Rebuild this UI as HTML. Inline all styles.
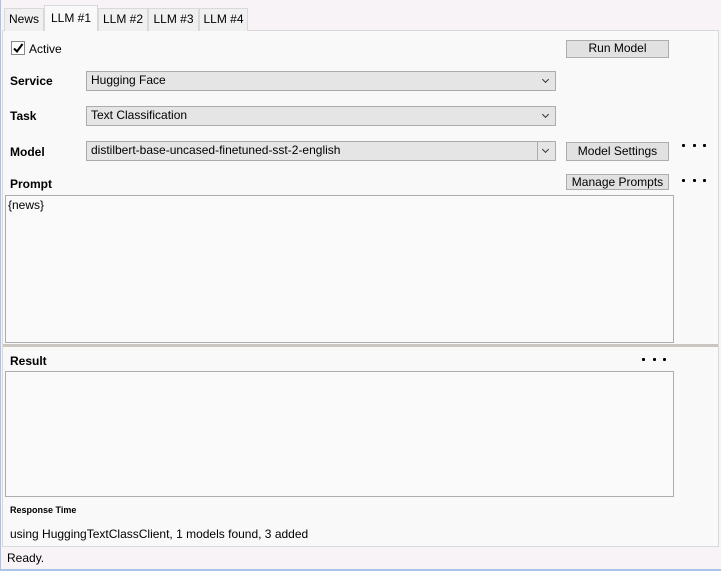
<!DOCTYPE html>
<html><head><style>
*{margin:0;padding:0;box-sizing:border-box}
body{width:721px;height:571px;position:relative;background:#f7f3f7;font-family:"Liberation Sans",sans-serif;font-size:12px;color:#000;overflow:hidden}
.a{position:absolute}
.tab{position:absolute;top:8px;height:23px;border:1px solid #d9d9d9;border-bottom:none;background:#f0f0f0;text-align:center;line-height:20px}
.btn{position:absolute;background:#e1e1e1;border:1px solid #adadad;text-align:center;line-height:15px}
.cb{position:absolute;left:86px;width:470px;height:20px;background:#e5e5e5;border:1px solid #acacac;padding-left:4px;line-height:17px}
.cb:after{content:"";position:absolute;right:7px;top:5px;width:4px;height:4px;border-right:1.5px solid #333;border-bottom:1.5px solid #333;transform:rotate(45deg)}
.lbl{position:absolute;left:10px;font-weight:bold;font-size:12px}
.box{position:absolute;left:5px;width:669px;background:#fafafa;border:1px solid #abadb3}
.dots{position:absolute;width:24px;height:3px;display:flex;justify-content:space-between}
.dots i{display:block;width:3px;height:3px;background:#000;border-radius:1px}
</style></head><body>
<div class="a" style="left:0;top:0;width:1px;height:571px;background:#a9c4e8"></div>
<div class="a" style="left:0;top:569px;width:721px;height:2px;background:#a9c4e8"></div>
<div class="a" style="left:2px;top:30px;width:717px;height:517px;background:#f9f9f9;border:1px solid #d9d9d9"></div>
<div class="tab" style="left:4px;width:40px">News</div>
<div class="tab" style="left:44px;top:5px;height:26px;width:54px;background:#f9f9f9;line-height:24px;z-index:2">LLM #1</div>
<div class="tab" style="left:98px;width:50px">LLM #2</div>
<div class="tab" style="left:148px;width:51px">LLM #3</div>
<div class="tab" style="left:199px;width:49px">LLM #4</div>
<div class="a" style="left:11px;top:41px;width:14px;height:14px;border:1px solid #888;background:#fff"><svg width="12" height="12" style="position:absolute;left:0;top:0"><path d="M2 6.5 L5 9.5 L10.5 2" fill="none" stroke="#000" stroke-width="2"/></svg></div>
<div class="a" style="left:29px;top:42px">Active</div>
<div class="btn" style="left:566px;top:40px;width:103px;height:18px">Run Model</div>
<div class="lbl" style="top:74px">Service</div>
<div class="cb" style="top:71px">Hugging Face</div>
<div class="lbl" style="top:109px">Task</div>
<div class="cb" style="top:106px">Text Classification</div>
<div class="lbl" style="top:145px">Model</div>
<div class="cb" style="top:141px;height:20px">distilbert-base-uncased-finetuned-sst-2-english</div>
<div class="a" style="left:537px;top:142px;width:1px;height:18px;background:#acacac"></div>
<div class="btn" style="left:566px;top:142px;width:103px;height:19px;line-height:17px">Model Settings</div>
<div class="dots" style="left:682px;top:144px"><i></i><i></i><i></i></div>
<div class="lbl" style="top:177px">Prompt</div>
<div class="btn" style="left:566px;top:174px;width:103px;height:16px;line-height:14px">Manage Prompts</div>
<div class="dots" style="left:682px;top:179px"><i></i><i></i><i></i></div>
<div class="box" style="top:195px;height:148px;padding:2px">{news}</div>
<div class="a" style="left:3px;top:344px;width:715px;height:3px;background:#c9c7c0"></div>
<div class="lbl" style="top:354px">Result</div>
<div class="dots" style="left:642px;top:358px"><i></i><i></i><i></i></div>
<div class="box" style="top:371px;height:126px"></div>
<div class="a" style="left:10px;top:505px;font-size:9px;font-weight:bold">Response Time</div>
<div class="a" style="left:10px;top:527px">using HuggingTextClassClient, 1 models found, 3 added</div>
<div class="a" style="left:2px;top:546px;width:717px;height:1px;background:#d9d9d9"></div>
<div class="a" style="left:7px;top:551px">Ready.</div>
</body></html>
